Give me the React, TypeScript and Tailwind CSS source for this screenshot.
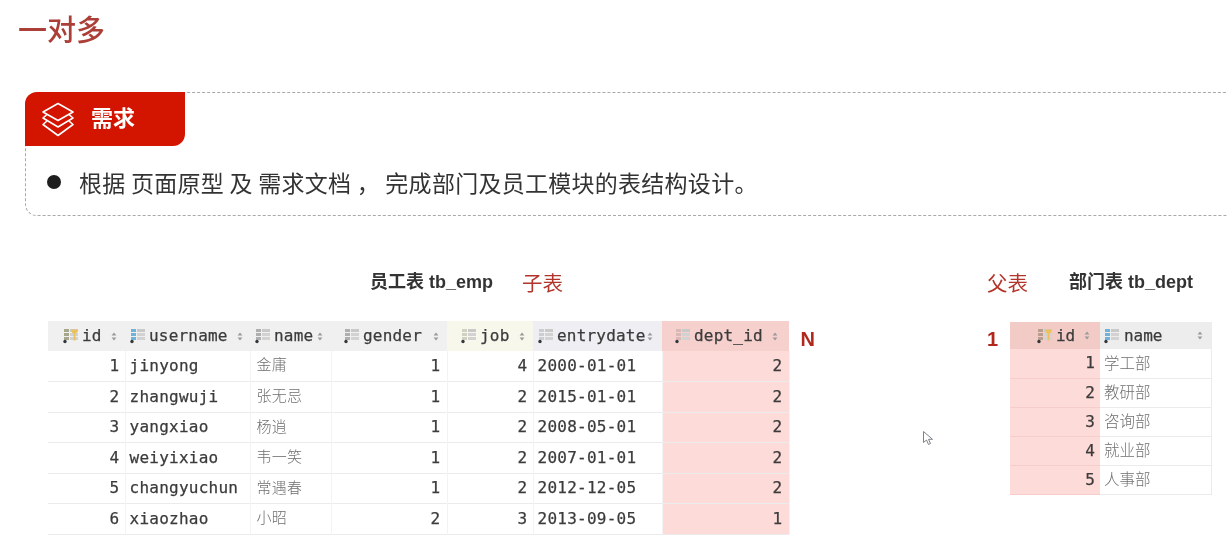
const mono = "font-['DejaVu_Sans_Mono','Liberation_Mono',monospace] [-webkit-text-stroke:0.25px_#3b3b3b]";
const cjk = "font-['Noto_Sans_CJK_SC',sans-serif]";
const heading = "font-['Liberation_Sans','Noto_Sans_CJK_SC',sans-serif]";

function ColumnIcon({ tint, hasKey }: { tint: string; hasKey?: boolean }) {
	return (
		<svg width="17" height="16" viewBox="0 0 17 16" className="shrink-0">
			<rect x="2" y="1" width="5" height="3" fill={tint} opacity="0.75" />
			<rect x="2" y="5" width="5" height="3" fill={tint} opacity="0.75" />
			<rect x="2" y="9" width="5" height="3" fill={tint} opacity="0.75" />
			<rect x="8" y="1" width="8" height="3" fill="#c9c9c9" />
			<rect x="8" y="5" width="8" height="3" fill="#d2d2d2" />
			<rect x="8" y="9" width="8" height="3" fill="#d2d2d2" />
			<circle cx="3" cy="13.5" r="1.7" fill="#33383d" />
			{hasKey && <path d="M10 1.5h5v3.5h-1.5v7.5h-2V5H10z" fill="#ecc25e" />}
		</svg>
	);
}

function SortMark() {
	return (
		<svg width="6" height="9" viewBox="0 0 6 9" className="shrink-0">
			<path d="M3 0.5 5.4 3.4H0.6zM3 8.5 0.6 5.6h4.8z" fill="#9a9a9a" />
		</svg>
	);
}

function LayersIcon() {
	return (
		<svg width="36" height="35" viewBox="0 0 36 35" fill="none" stroke="#fff" strokeWidth="1.6" strokeLinejoin="round">
			<path d="M18 1.5 33 10 18 18.5 3 10z" />
			<path d="M7 12.5 3 16 18 25 33 16 29 12.5" />
			<path d="M7 19 3 22.5 18 33.5 33 22.5 29 19" />
		</svg>
	);
}

const empColumns = [
	{ title: "id", width: "w-[77px]", head: "pl-[14px] pr-[8px] bg-[#f0f0f0]", cell: "pr-[5px] text-right", tint: "#8d8d6a", hasKey: true },
	{ title: "username", width: "w-[125px]", head: "pl-[4px] pr-[7px] bg-[#f0f0f0]", cell: "pl-[4px]", tint: "#4a9ed0" },
	{ title: "name", width: "w-[81px]", head: "pl-[4px] pr-[8px] bg-[#f0f0f0]", cell: "pl-[6px] pb-[3px]", tint: "#9a9a9a" },
	{ title: "gender", width: "w-[116px]", head: "pl-[12px] pr-[8px] bg-[#f0f0f0]", cell: "pr-[6px] text-right", tint: "#9a9a9a" },
	{ title: "job", width: "w-[86px]", head: "pl-[13px] pr-[8px] bg-[#f8f7ec]", cell: "pr-[5px] text-right", tint: "#c4c4b4" },
	{ title: "entrydate", width: "w-[129px]", head: "pl-[4px] pr-[9px] bg-[#eeeef3]", cell: "pl-[4px]", tint: "#c0c0c8" },
	{ title: "dept_id", width: "w-[127px]", head: "pl-[12px] pr-[11px] bg-[#f6d0cd]", cell: "pr-[6px] text-right bg-[#fddbd8]", tint: "#cfb0ae" },
];

const empRows = [
	["1", "jinyong", "金庸", "1", "4", "2000-01-01", "2"],
	["2", "zhangwuji", "张无忌", "1", "2", "2015-01-01", "2"],
	["3", "yangxiao", "杨逍", "1", "2", "2008-05-01", "2"],
	["4", "weiyixiao", "韦一笑", "1", "2", "2007-01-01", "2"],
	["5", "changyuchun", "常遇春", "1", "2", "2012-12-05", "2"],
	["6", "xiaozhao", "小昭", "2", "3", "2013-09-05", "1"],
];

const deptRows = [
	["1", "学工部"],
	["2", "教研部"],
	["3", "咨询部"],
	["4", "就业部"],
	["5", "人事部"],
];

function EmpTable() {
	return (
		<table className={`w-[741px] table-fixed border-collapse text-[16px] text-[#3b3b3b] ${mono}`}>
			<colgroup>
				{empColumns.map((col) => (
					<col key={col.title} className={col.width} />
				))}
			</colgroup>
			<thead>
				<tr className="h-[30px]">
					{empColumns.map((col) => (
						<th key={col.title} className={`p-0 font-normal ${col.head}`}>
							<div className="flex items-center justify-between">
								<span className="flex items-center gap-[3px]">
									<ColumnIcon tint={col.tint} hasKey={col.hasKey} />
									<span className="tracking-[0.2px]">{col.title}</span>
								</span>
								<SortMark />
							</div>
						</th>
					))}
				</tr>
			</thead>
			<tbody>
				{empRows.map((row) => (
					<tr key={row[0]} className="h-[30.5px] border-b border-[#ebebeb]">
						{row.map((value, i) => (
							<td key={i} className={`border-r border-[#f3f3f3] p-0 tracking-[0.25px] ${empColumns[i].cell} ${i === 2 ? `${cjk} text-[15px] font-light text-[#6f6f6f] [-webkit-text-stroke:0px]` : ""}`}>
								{value}
							</td>
						))}
					</tr>
				))}
			</tbody>
		</table>
	);
}

function DeptTable() {
	return (
		<table className={`w-[202px] table-fixed border-collapse text-[16px] text-[#3b3b3b] ${mono}`}>
			<colgroup>
				<col className="w-[90px]" />
				<col className="w-[112px]" />
			</colgroup>
			<thead>
				<tr className="h-[27px]">
					<th className="bg-[#f2cbc7] p-0 pl-[26px] pr-[10px] font-normal">
						<div className="flex items-center justify-between">
							<span className="flex items-center gap-[3px]">
								<ColumnIcon tint="#a58f78" hasKey />
								<span>id</span>
							</span>
							<SortMark />
						</div>
					</th>
					<th className="bg-[#ededed] p-0 pl-[3px] pr-[9px] font-normal">
						<div className="flex items-center justify-between">
							<span className="flex items-center gap-[4px]">
								<ColumnIcon tint="#4a9ed0" />
								<span>name</span>
							</span>
							<SortMark />
						</div>
					</th>
				</tr>
			</thead>
			<tbody>
				{deptRows.map((row) => (
					<tr key={row[0]} className="h-[29px]">
						<td className="border-b border-[#f6cdca] bg-[#fddbd8] p-0 pr-[5px] text-right">{row[0]}</td>
						<td className={`border-r border-b border-[#ebebeb] p-0 pb-[2px] pl-[4px] text-[15.5px] font-light text-[#6f6f6f] [-webkit-text-stroke:0px] ${cjk}`}>{row[1]}</td>
					</tr>
				))}
			</tbody>
		</table>
	);
}

export default function App() {
	return (
		<div className="relative h-[548px] w-[1228px] overflow-hidden bg-white blur-[0.4px]">
			<h1 className={`pl-[18px] pt-[9px] text-[29px] leading-[38px] font-medium text-[#ab3f37] ${cjk}`}>一对多</h1>

			<section className="mt-[45px] -mr-[20px] ml-[25px] h-[124px] rounded-xl border border-dashed border-[#a9a9a9]">
				<div className="-mt-px -ml-px flex h-[54px] w-[160px] items-center rounded-tl-xl rounded-br-xl bg-[#d31500] pl-[15px]">
					<LayersIcon />
					<span className={`-mt-[6px] ml-[15px] text-[22px] font-bold text-white ${cjk}`}>需求</span>
				</div>
				<div className="mt-[20px] flex items-center pl-[21px]">
					<span className="h-[14px] w-[14px] rounded-full bg-[#1e1e1e]" />
					<p className={`ml-[18px] text-[23px] leading-[32px] tracking-[0.27px] text-[#333333] ${cjk}`}>根据 页面原型 及 需求文档 ， 完成部门及员工模块的表结构设计。</p>
				</div>
			</section>

			<div className="mt-[51px] flex items-start">
				<div className="ml-[48px] flex flex-col">
					<div className="flex h-[30px] items-center pl-[322px]">
						<span className={`text-[18px] font-bold text-[#333333] ${heading}`}>员工表 tb_emp</span>
						<span className={`ml-[29px] text-[20.5px] text-[#b2342a] ${cjk}`}>子表</span>
					</div>
					<div className="mt-[24px] flex items-start">
						<EmpTable />
						<span className={`ml-[11px] mt-[6px] text-[20px] leading-[24px] font-bold text-[#b2271c] ${heading}`}>N</span>
					</div>
				</div>

				<div className="ml-[172px] flex flex-col">
					<div className="flex h-[30px] items-center">
						<span className={`text-[20.5px] text-[#b2342a] ${cjk}`}>父表</span>
						<span className={`ml-[41px] text-[18px] font-bold text-[#333333] ${heading}`}>部门表 tb_dept</span>
					</div>
					<div className="mt-[25px] flex items-start">
						<span className={`mt-[5px] w-[23px] text-[20px] leading-[24px] font-bold text-[#b2271c] ${heading}`}>1</span>
						<DeptTable />
					</div>
				</div>
			</div>

			<svg width="13" height="17" viewBox="0 0 13 17" className="absolute top-[430px] left-[922px]" fill="#fff" stroke="#7d8288" strokeWidth="1">
				<path d="M1.5 1.5v11l3-2.5 2 4.5 2-1-2-4.2h4z" />
			</svg>
		</div>
	);
}
